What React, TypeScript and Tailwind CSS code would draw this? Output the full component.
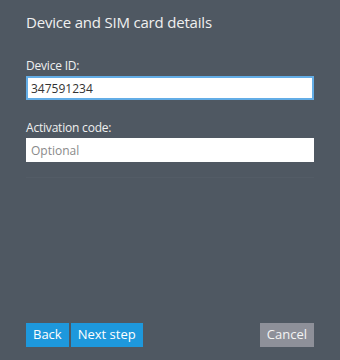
import React from "react";

export default function App() {
  return (
    <div
      className="w-[340px] h-[360px] bg-[#4f5862] flex flex-col px-[26px] pt-[12px] pb-[13px] text-[#f0f0f0]"
      style={{ fontFamily: '"Open Sans", "Noto Sans", sans-serif' }}
    >
      <h1 className="text-[15px] leading-[20px] tracking-[-0.2px]">Device and SIM card details</h1>

      <label className="mt-[26px] text-[12px] leading-[16px] tracking-[-0.2px]">Device ID:</label>
      <input
        defaultValue="347591234"
        className="mt-[2px] h-[24px] w-full bg-white border-2 border-[#63ade6] px-[3px] text-[12px] text-[#333] outline-none"
      />

      <label className="mt-[20px] text-[12px] leading-[16px] tracking-[-0.2px]">Activation code:</label>
      <input
        placeholder="Optional"
        className="mt-[2px] h-[24px] w-full bg-white px-[5px] text-[12px] text-[#333] placeholder:text-[#8a8a8a] outline-none"
      />

      <div className="mt-[15px] h-px bg-[#535c66]" />

      <div className="mt-auto flex items-center">
        <button className="h-[24px] px-[7px] bg-[#1e98dc] text-[13px] text-white">Back</button>
        <button className="ml-[2px] h-[24px] px-[7px] bg-[#1e98dc] text-[13px] text-white">Next step</button>
        <button className="ml-auto h-[24px] px-[7px] bg-[#8e9099] text-[13px] text-[#f4f4f4]">Cancel</button>
      </div>
    </div>
  );
}
